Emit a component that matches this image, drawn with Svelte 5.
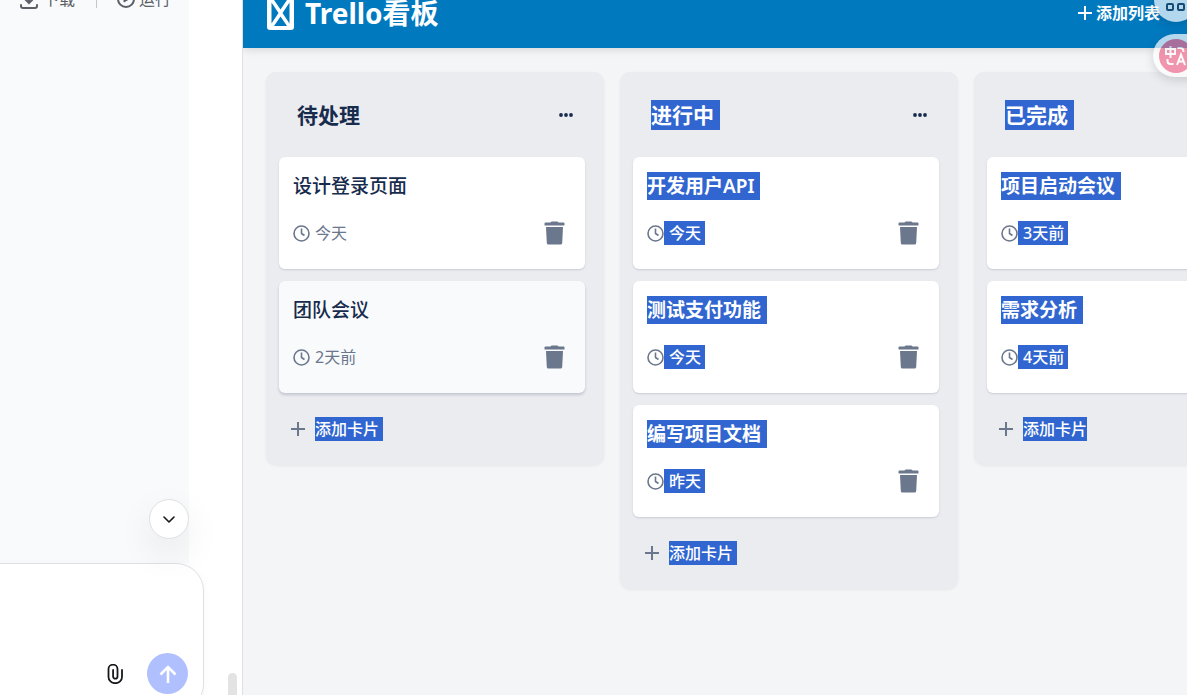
<script>
  let draft = $state('');

  let columns = $state([
    {
      id: 'todo',
      title: '待处理',
      addMarked: true,
      cards: [
        { id: 1, title: '设计登录页面', due: '今天' },
        { id: 2, title: '团队会议', due: '2天前', hovered: true }
      ]
    },
    {
      id: 'doing',
      title: '进行中',
      marked: true,
      addMarked: true,
      cards: [
        { id: 3, title: '开发用户API', due: '今天' },
        { id: 4, title: '测试支付功能', due: '今天' },
        { id: 5, title: '编写项目文档', due: '昨天' }
      ]
    },
    {
      id: 'done',
      title: '已完成',
      marked: true,
      addMarked: true,
      last: true,
      cards: [
        { id: 6, title: '项目启动会议', due: '3天前' },
        { id: 7, title: '需求分析', due: '4天前' }
      ]
    }
  ]);

  function removeCard(column, id) {
    column.cards = column.cards.filter(card => card.id !== id);
  }
</script>

<div class="app">
  <aside class="chat">
    <div class="document">
      <div class="toolbar">
        <button class="tool">
          <svg width="20" height="20" viewBox="0 0 20 20" fill="none" stroke="currentColor" stroke-width="2" stroke-linecap="round">
            <path d="M10 1v12M6 10l4 4 4-4M2 16v1q0 2 2 2h12q2 0 2-2v-1" />
          </svg>
          下载
        </button>
        <span class="divider"></span>
        <button class="tool">
          <svg width="18" height="18" viewBox="0 0 18 18" fill="none" stroke="currentColor" stroke-width="2">
            <circle cx="9" cy="9" r="8" />
            <path d="M7 6l5 3-5 3z" fill="currentColor" stroke-width="1" />
          </svg>
          运行
        </button>
      </div>
    </div>

    <form class="composer" onsubmit={e => e.preventDefault()}>
      <textarea aria-label="消息" bind:value={draft}></textarea>
      <div class="composer-actions">
        <button class="attach" type="button" aria-label="附件">
          <svg width="16" height="20" viewBox="0 0 16 20" fill="none" stroke="currentColor" stroke-width="1.800" stroke-linecap="round">
            <path d="M15 6v7a6.500 6 0 0 1-13.500 0V5a4.200 4 0 0 1 9 0v7.500a2.200 2.200 0 0 1-4.400 0V6" />
          </svg>
        </button>
        <button class="send" aria-label="发送">
          <svg width="18" height="18" viewBox="0 0 18 18" fill="none" stroke="currentColor" stroke-width="2.600">
            <path d="M9 18V2M1.500 9.500L9 2l7.500 7.500" />
          </svg>
        </button>
      </div>
    </form>

    <button class="scroll-down" aria-label="滚动到底部">
      <svg width="12" height="7" viewBox="0 0 12 7" fill="none" stroke="currentColor" stroke-width="1.600" stroke-linecap="round" stroke-linejoin="round">
        <path d="M1 1l5 5 5-5" />
      </svg>
    </button>
    <span class="scroll-thumb"></span>
  </aside>

  <main class="board">
    <header class="board-header">
      <h1>
        <svg width="27" height="34" viewBox="0 0 27 34">
          <rect width="27" height="34" rx="3" fill="#fff" />
          <path d="M7 4h13l-6.500 9.500zM4.500 6.500L11.500 17l-7 10.500zM22.500 6.500L15.500 17l7 10.500zM7 30l6.500-9.500L20 30z" fill="#0079bf" />
        </svg>
        Trello看板
      </h1>
      <button class="add-list">
        <svg width="14" height="14" viewBox="0 0 14 14" stroke="currentColor" stroke-width="2">
          <path d="M7 0v14M0 7h14" />
        </svg>
        添加列表
      </button>
    </header>

    <div class="columns">
      {#each columns as column (column.id)}
        <section class="column">
          <div class="column-header">
            <h2><span class:marked={column.marked}>{column.title}</span></h2>
            <button class="more" aria-label="更多">
              <svg width="14" height="4" viewBox="0 0 14 4" fill="currentColor">
                <circle cx="2" cy="2" r="1.900" />
                <circle cx="7" cy="2" r="1.900" />
                <circle cx="12" cy="2" r="1.900" />
              </svg>
            </button>
          </div>

          <div class="cards">
            {#each column.cards as card (card.id)}
              <article class="card" class:hovered={card.hovered}>
                <h3><span class:marked={column.marked}>{card.title}</span></h3>
                <div class="card-footer">
                  <div class="due">
                    <svg width="17" height="17" viewBox="0 0 17 17" fill="none" stroke="currentColor" stroke-width="1.600">
                      <circle cx="8.500" cy="8.500" r="7.500" />
                      <path d="M8.500 3.500v5l3 2" />
                    </svg>
                    <span class="due-text" class:marked={column.marked}>{card.due}</span>
                  </div>
                  <button class="remove" aria-label="删除" onclick={() => removeCard(column, card.id)}>
                    <svg width="21" height="24" viewBox="0 0 21 24" fill="currentColor">
                      <path d="M6.500 1.500Q7 .5 8 .5h5q1 0 1.500 1h5q1 0 1 1V4q0 .6-.8.600H1.300Q.5 4.600.5 4V2.500q0-1 1-1z" />
                      <path d="M2 6h17l-.8 16q-.1 1.500-1.600 1.500H4.400q-1.500 0-1.600-1.500z" />
                    </svg>
                  </button>
                </div>
              </article>
            {/each}
          </div>

          <button class="add-card">
            <svg width="14" height="14" viewBox="0 0 14 14" stroke="currentColor" stroke-width="2">
              <path d="M7 0v14M0 7h14" />
            </svg>
            <span class:marked={column.addMarked} class:flush={column.last}>添加卡片</span>
          </button>
        </section>
      {/each}
    </div>
  </main>

  <button class="float apps" aria-label="应用">
    <svg width="20" height="8" viewBox="0 0 20 8" fill="none" stroke="#1f3a55" stroke-width="2">
      <rect x="1" y="1" width="6" height="6" rx="1" />
      <rect x="12" y="1" width="6" height="6" rx="1" />
    </svg>
  </button>
  <button class="float translate" aria-label="翻译">
    <svg width="34" height="34" viewBox="0 0 34 34" fill="none" stroke="#fff" stroke-width="2">
      <circle cx="17" cy="17" r="17" fill="#f06c8f" stroke="none" />
      <path d="M7 10h9v5H7zM11.500 7v12M18.500 9h3q3 0 3 4M8.500 20v2q0 3 3 3h3M18 26l4-10.500L26 26M19.500 22.500h5" />
    </svg>
  </button>
</div>

<style>
  :global(body) {
    background: #fff;
  }

  .app {
    position: relative;
    display: flex;
    height: 100vh;
    overflow: hidden;
    font-family: 'Noto Sans', 'Noto Sans CJK SC', sans-serif;
    font-size: 16px;
    line-height: 24px;
    color: #172b4d;
  }

  button {
    display: flex;
    align-items: center;
    justify-content: center;
    padding: 0;
    border: none;
    background: none;
    color: inherit;
    font: inherit;
    cursor: pointer;
  }

  h1, h2, h3 {
    margin: 0;
  }

  svg {
    display: block;
    flex: none;
  }

  .marked {
    display: inline-block;
    padding-right: 4px;
    background: #3166d0;
    color: #fff;
  }

  .marked.flush {
    padding-right: 0;
  }

  /* chat side */
  .chat {
    position: relative;
    display: flex;
    flex: none;
    flex-direction: column;
    width: 242px;
    border-right: 1px solid #e0e0e2;
    background: #fff;
  }

  .document {
    flex: 1;
    margin-right: 53px;
    background: #f9fafc;
  }

  .toolbar {
    display: flex;
    align-items: center;
    height: 24px;
    margin-top: -13px;
    padding-left: 19px;
    color: #5c5f66;
  }

  .tool {
    gap: 4px;
    font-size: 16px;
  }

  .divider {
    width: 1px;
    height: 18px;
    margin: 0 20px 0 21px;
    background: #c4c6ca;
  }

  .composer {
    display: flex;
    flex-direction: column;
    box-sizing: border-box;
    height: 149px;
    margin: 0 38px -17px -32px;
    padding: 16px 15px 17px;
    border: 1px solid #dfe0e3;
    border-radius: 28px;
    background: #fff;
    box-shadow: 0 2px 8px rgba(0, 0, 0, 0.04);
  }

  textarea {
    flex: 1;
    min-height: 0;
    border: none;
    outline: none;
    resize: none;
    background: transparent;
    font: inherit;
  }

  .composer-actions {
    display: flex;
    align-items: center;
    justify-content: flex-end;
    gap: 24px;
    color: #17181c;
  }

  .send {
    width: 41px;
    height: 41px;
    border-radius: 50%;
    background: #b0c0ff;
    color: #fff;
  }

  .scroll-down {
    position: absolute;
    right: 53px;
    bottom: 156px;
    box-sizing: border-box;
    width: 40px;
    height: 40px;
    border: 1px solid #dfe0e3;
    border-radius: 50%;
    background: #fff;
    color: #17181c;
    box-shadow: 0 14px 36px rgba(0, 0, 0, 0.08);
  }

  .scroll-thumb {
    position: absolute;
    right: 5px;
    bottom: 0;
    width: 9px;
    height: 22px;
    border-radius: 5px 5px 0 0;
    background: #e3e3e3;
  }

  /* board */
  .board {
    flex: 1;
    min-width: 0;
    overflow: hidden;
    background: #f4f5f7;
  }

  .board-header {
    display: flex;
    align-items: center;
    justify-content: space-between;
    height: 70px;
    margin-top: -22px;
    padding: 0 27px 0 24px;
    background: #0079bf;
    color: #fff;
    box-shadow: 0 2px 8px rgba(0, 0, 0, 0.12);
  }

  h1 {
    display: flex;
    align-items: center;
    gap: 11px;
    font-size: 28px;
    line-height: 40px;
    font-weight: 700;
  }

  .add-list {
    gap: 4px;
    font-weight: 700;
  }

  .columns {
    display: flex;
    align-items: flex-start;
    gap: 16px;
    padding: 24px 23px;
  }

  .column {
    flex: none;
    box-sizing: border-box;
    width: 338px;
    padding: 12px 19px 12px 13px;
    border-radius: 10px;
    background: #ebecf0;
    box-shadow: 0 1px 3px rgba(0, 0, 0, 0.06);
  }

  .column-header {
    display: flex;
    align-items: center;
    justify-content: space-between;
    height: 62px;
    margin-bottom: 11px;
    padding: 0 12px 0 18px;
  }

  h2 {
    font-size: 21px;
    line-height: 30px;
    font-weight: 700;
  }

  h2 .marked,
  h3 .marked {
    padding-right: 6px;
  }

  .cards {
    display: flex;
    flex-direction: column;
    gap: 12px;
  }

  .card {
    padding: 15px 14px 16px;
    border-radius: 6px;
    background: #fff;
    box-shadow: 0 1px 2px rgba(9, 30, 66, 0.15);
  }

  .card.hovered {
    background: #f9fafc;
    box-shadow: 0 2px 3px rgba(9, 30, 66, 0.18);
  }

  h3 {
    height: 28px;
    font-size: 19px;
    line-height: 28px;
    font-weight: 500;
  }

  h3 .marked {
    font-weight: 600;
  }

  .card-footer {
    display: flex;
    align-items: center;
    justify-content: space-between;
    height: 40px;
    margin-top: 13px;
    padding-right: 6px;
    color: #6b778c;
  }

  .due {
    display: flex;
    align-items: center;
  }

  .due-text {
    padding-left: 5px;
  }

  .due-text.marked {
    font-weight: 500;
  }

  .add-card {
    gap: 10px;
    height: 48px;
    margin-top: 12px;
    padding: 0 12px;
    color: #6b778c;
    font-weight: 500;
  }

  /* floating widgets on the window edge */
  .float {
    position: absolute;
    background: #fff;
    opacity: 0.7;
    box-shadow: 0 3px 10px rgba(0, 0, 0, 0.2);
  }

  .apps {
    top: -22px;
    right: -11px;
    align-items: flex-end;
    width: 44px;
    height: 44px;
    padding-bottom: 11px;
    border-radius: 50%;
  }

  .translate {
    top: 34px;
    right: -26px;
    justify-content: flex-start;
    width: 60px;
    height: 43px;
    padding-left: 6px;
    border-radius: 22px;
  }
</style>
